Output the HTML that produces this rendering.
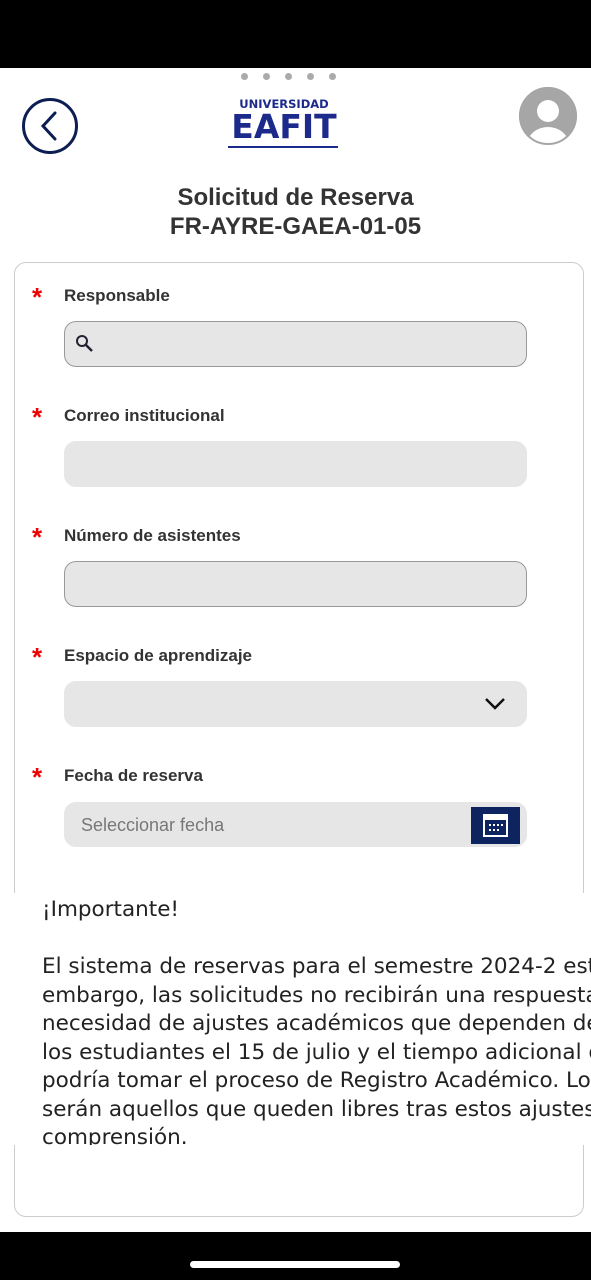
<!DOCTYPE html>
<html><head><meta charset="utf-8"><style>
body{margin:0;width:591px;height:1280px;background:#fff;position:relative;overflow:hidden;font-family:"Liberation Sans",sans-serif}
.abs{position:absolute}
.card{left:14px;top:262px;width:568px;height:953px;border:1.5px solid #ccc;border-radius:12px}
.lbl{left:64px;font-weight:bold;font-size:17px;color:#333}
.star{left:32px;color:#e00;font-size:26px;font-weight:bold}
.inp{left:64px;width:463px;height:46px;border-radius:12px;background:#e6e6e6;box-sizing:border-box}
.b{border:1.5px solid #999}
</style></head><body>
<div class="abs" style="left:0;top:0;width:591px;height:68px;background:#000"></div>
<div class="abs" style="left:241px;top:73px;font-size:0">
<span style="display:inline-block;width:7px;height:7px;border-radius:50%;background:#aaa;margin-right:15px"></span><span style="display:inline-block;width:7px;height:7px;border-radius:50%;background:#aaa;margin-right:15px"></span><span style="display:inline-block;width:7px;height:7px;border-radius:50%;background:#aaa;margin-right:15px"></span><span style="display:inline-block;width:7px;height:7px;border-radius:50%;background:#aaa;margin-right:15px"></span><span style="display:inline-block;width:7px;height:7px;border-radius:50%;background:#aaa"></span></div>
<svg class="abs" style="left:21px;top:97px" width="58" height="58"><circle cx="29" cy="29" r="26.5" fill="none" stroke="#0d1f52" stroke-width="3"/><path d="M34 16 L22 29 L34 42" fill="none" stroke="#0d1f52" stroke-width="3" stroke-linecap="round"/></svg>
<div class="abs" style="left:226px;top:98px;width:116px;text-align:center;color:#1c2a8c;font-family:'DejaVu Sans',sans-serif;font-weight:bold;font-size:11.5px;line-height:13px">UNIVERSIDAD</div>
<div class="abs" style="left:226px;top:110px;width:116px;text-align:center;color:#1c2a8c;font-family:'DejaVu Sans',sans-serif;font-weight:900;font-size:33px;line-height:34px">EAFIT</div>
<div class="abs" style="left:228px;top:146px;width:110px;height:2px;background:#1c2a8c"></div>
<svg class="abs" style="left:519px;top:87px" width="58" height="58"><defs><clipPath id="c"><circle cx="29" cy="29" r="29"/></clipPath></defs><circle cx="29" cy="29" r="29" fill="#a6a6a6"/><g clip-path="url(#c)" fill="#fff"><circle cx="29" cy="24" r="11"/><ellipse cx="29" cy="58" rx="21" ry="18"/></g><circle cx="29" cy="29" r="28" fill="none" stroke="#a6a6a6" stroke-width="2"/></svg>
<div class="abs" style="left:0;top:183px;width:591px;text-align:center;font-weight:bold;font-size:24px;color:#333;line-height:29px">Solicitud de Reserva<br>FR-AYRE-GAEA-01-05</div>
<div class="abs card"></div>
<div class="abs star" style="top:282px">*</div><div class="abs lbl" style="top:286px">Responsable</div>
<div class="abs inp b" style="top:321px"><svg class="abs" style="left:10px;top:12px" width="20" height="20"><circle cx="7" cy="7" r="5" fill="none" stroke="#223" stroke-width="2"/><path d="M11 11 L17 17" stroke="#223" stroke-width="2.5"/></svg></div>
<div class="abs star" style="top:402px">*</div><div class="abs lbl" style="top:406px">Correo institucional</div>
<div class="abs inp" style="top:441px"></div>
<div class="abs star" style="top:522px">*</div><div class="abs lbl" style="top:526px">Número de asistentes</div>
<div class="abs inp b" style="top:561px"></div>
<div class="abs star" style="top:642px">*</div><div class="abs lbl" style="top:646px">Espacio de aprendizaje</div>
<div class="abs inp" style="top:681px"><svg class="abs" style="left:419px;top:15px" width="24" height="16"><path d="M3 3 L12 12 L21 3" fill="none" stroke="#111" stroke-width="2.5"/></svg></div>
<div class="abs star" style="top:762px">*</div><div class="abs lbl" style="top:766px">Fecha de reserva</div>
<div class="abs inp" style="top:802px;height:45px"><div class="abs" style="left:17px;top:13px;font-size:18px;color:#777">Seleccionar fecha</div>
<div class="abs" style="left:407px;top:5px;width:49px;height:37px;background:#0d2461"><svg class="abs" style="left:12px;top:7px" width="25" height="23"><rect x="1" y="1" width="23" height="21" fill="none" stroke="#fff" stroke-width="2"/><rect x="1" y="1" width="23" height="5" fill="#fff"/><g fill="#fff"><rect x="6" y="10" width="2" height="2"/><rect x="10" y="10" width="2" height="2"/><rect x="14" y="10" width="2" height="2"/><rect x="18" y="10" width="2" height="2"/><rect x="6" y="15" width="2" height="2"/><rect x="10" y="15" width="2" height="2"/><rect x="14" y="15" width="2" height="2"/></g></svg></div></div>
<div class="abs" style="left:0;top:893px;width:591px;height:252px;background:#fff;overflow:hidden">
<div class="abs" style="left:42px;top:3px;white-space:nowrap;font-family:'DejaVu Sans',sans-serif;font-size:21.5px;color:#222;line-height:28.5px">¡Importante!<br><br>El sistema de reservas para el semestre 2024-2 está habilitado; sin<br>embargo, las solicitudes no recibirán una respuesta hasta<br>necesidad de ajustes académicos que dependen de<br>los estudiantes el 15 de julio y el tiempo adicional que<br>podría tomar el proceso de Registro Académico. Los<br>serán aquellos que queden libres tras estos ajustes.<br>comprensión.</div></div>
<div class="abs" style="left:0;top:1232px;width:591px;height:48px;background:#000"></div>
<div class="abs" style="left:190px;top:1261px;width:210px;height:7px;border-radius:4px;background:#fff"></div>
</body></html>
